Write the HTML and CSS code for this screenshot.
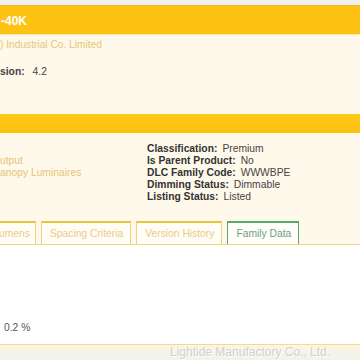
FILE: index.html
```html
<!DOCTYPE html>
<html>
<head>
<meta charset="utf-8">
<link rel="stylesheet" href="styles.css">
</head>
<body>
<div class="topstrip"></div>
<div class="titlebar"><span class="title">-40K</span></div>
<div class="cream">
  <div class="company">) Industrial Co. Limited</div>
  <div class="version"><b>sion:</b><span class="val">4.2</span></div>
  <div class="bar"></div>
  <div class="info">
    <div class="leftcol">
      <div class="row tan">utput</div>
      <div class="row tan">anopy Luminaires</div>
    </div>
    <div class="rightcol">
      <div class="row"><b>Classification:</b><span class="val">Premium</span></div>
      <div class="row"><b>Is Parent Product:</b><span class="val">No</span></div>
      <div class="row"><b>DLC Family Code:</b><span class="val">WWWBPE</span></div>
      <div class="row"><b>Dimming Status:</b><span class="val">Dimmable</span></div>
      <div class="row"><b>Listing Status:</b><span class="val">Listed</span></div>
    </div>
  </div>
  <div class="tabs">
    <div class="tab first">umens</div>
    <div class="tab">Spacing Criteria</div>
    <div class="tab">Version History</div>
    <div class="tab active">Family Data</div>
  </div>
</div>
<div class="content">
  <div class="pct">0.2 %</div>
</div>
<div class="footer">Lightide Manufactory Co., Ltd.</div>
</body>
</html>
```

FILE: styles.css
```css
html, body {
  margin: 0;
  padding: 0;
  background: #ffffff;
  font-family: "Liberation Sans", Arial, sans-serif;
  font-size: 10.3px;
  color: #333333;
  overflow: hidden;
  height: 360px;
}
.topstrip {
  height: 5px;
  background: #f0f0ec;
}
.titlebar {
  height: 28px;
  background: #fec213;
  border-top: 1px solid #ecb820;
  border-bottom: 1px solid #fde8a6;
  display: flex;
  align-items: center;
}
.title {
  color: #ffffff;
  font-weight: bold;
  font-size: 12px;
  margin-left: 1px;
  margin-top: 1px;
}
.cream {
  background: #fef9ea;
  padding-top: 4px;
  overflow: hidden;
}
.company {
  color: #e6c677;
  font-size: 10.2px;
  line-height: 12px;
}
.version {
  margin-top: 15px;
  line-height: 12px;
  color: #444;
}
.version .val {
  margin-left: 8px;
}
.bar {
  margin-top: 36px;
  height: 19px;
  background: linear-gradient(#fec817, #fdc010);
}
.info {
  display: flex;
  margin-top: 10px;
}
.leftcol {
  width: 147px;
  padding-top: 12px;
}
.row {
  line-height: 12px;
  white-space: nowrap;
}
.tan {
  color: #e6c677;
}
.rightcol .row b {
  color: #333;
}
.rightcol .val {
  margin-left: 5px;
  color: #444;
}
.tabs {
  display: flex;
  gap: 5px;
  margin-top: 18px;
  margin-left: -4px;
  border-bottom: 1px solid #f0d67c;
}
.tab {
  border: 1px solid #eed27c;
  border-top: 2px solid #e9c43c;
  border-bottom: none;
  padding: 4px 7px 4px 8px;
  line-height: 13px;
  color: #e8cc86;
  background: #fffdf6;
  white-space: nowrap;
}
.tab.first {
  padding-left: 2px;
  padding-right: 5px;
}
.tab.active {
  border-color: #5aa869;
  color: #6f9f7e;
  background: #fffef9;
}
.content {
  height: 99px;
  background: #ffffff;
  position: relative;
}
.pct {
  position: absolute;
  left: 4px;
  top: 77px;
  line-height: 12px;
  color: #555;
}
.footer {
  border-top: 1px solid #f3da8c;
  background: linear-gradient(#fdf5e0, #f2f1ec 60%);
  height: 20px;
  padding-left: 170px;
  font-size: 12px;
  line-height: 14px;
  color: #d0d0d0;
  text-shadow: 1px 1px 0 #ffffff;
}
```
